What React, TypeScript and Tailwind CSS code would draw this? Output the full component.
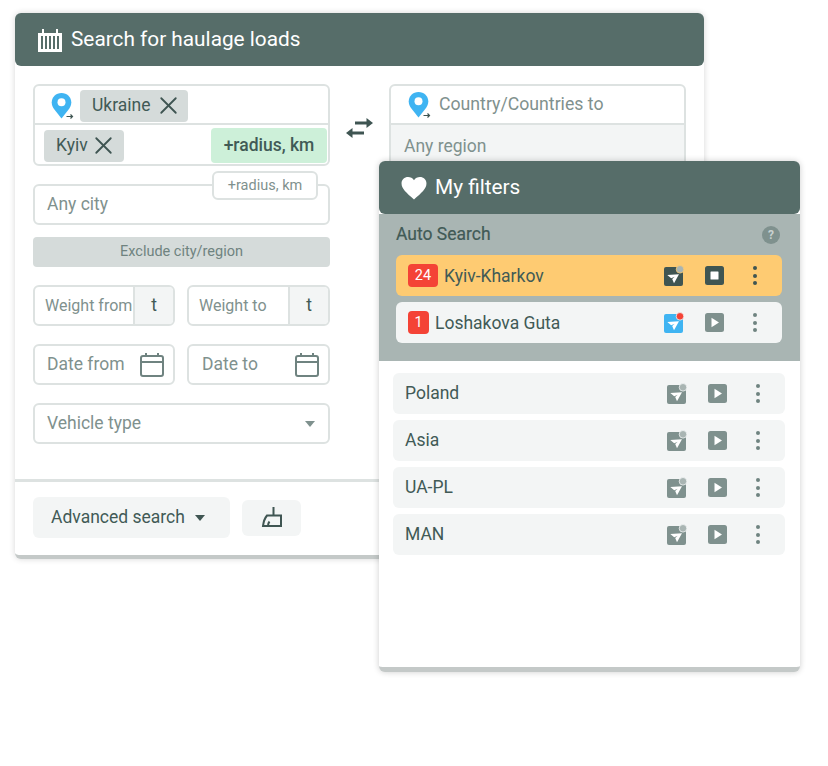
import { X } from "lucide-react";

function Pin() {
  return (
    <svg width="24" height="28" viewBox="0 0 24 28" className="shrink-0">
      <path d="M10.500 1C4.900 1 .7 5.200.7 10.600c0 2.600 1 4.600 2.300 6.500l7.500 9.400 7.500-9.400c1.300-1.900 2.300-3.900 2.300-6.500C20.300 5.200 16.100 1 10.500 1z" fill="#3fb4f2" />
      <circle cx="10.500" cy="10.200" r="4" fill="#fff" />
      <path d="M15.500 24.500h6M19.500 22.500l2 2-2 2" stroke="#3f5552" strokeWidth="1.200" fill="none" />
    </svg>
  );
}

function Chip({ label, spacing }: { label: string; spacing: string }) {
  return (
    <span className={`flex h-8 items-center rounded bg-[#d5dbda] pl-3 text-[17.500px] text-[#415a56] ${spacing}`}>
      {label}
      <X size={29} strokeWidth={1.500} className="text-[#3f5552]" />
    </span>
  );
}

function CalendarIcon() {
  return (
    <svg width="24" height="24" viewBox="0 0 24 24" fill="none" stroke="#6f8380" strokeWidth="2">
      <rect x="1" y="3" width="22" height="20" rx="2" />
      <path d="M1 9h22" />
      <path d="M6 0v3M18 0v3" />
    </svg>
  );
}

function Telegram({ bg, dot, ring }: { bg: string; dot: string; ring: string }) {
  return (
    <svg width="21" height="21" viewBox="0 0 21 21" className="overflow-visible">
      <rect x="0" y="2" width="19" height="19" rx="2" fill={bg} />
      <path d="M3.300 10l11.700-.7-5 9-1.800-4.300 2.500-2.200-3.500 1.500z" fill="#fff" />
      <circle cx="16" cy="4.300" r="3.800" fill={dot} stroke={ring} strokeWidth="0.800" />
    </svg>
  );
}

function Control({ bg, fill }: { bg: string; fill: "stop" | "play" }) {
  return (
    <svg width="19" height="19" viewBox="0 0 19 19">
      <rect width="19" height="19" rx="2.500" fill={bg} />
      {fill === "stop" ? <rect x="5.500" y="5.500" width="8" height="8" rx="0.500" fill="#fff" /> : <path d="M6.500 4.800l7.500 4.700-7.500 4.700z" fill="#fff" />}
    </svg>
  );
}

function Dots({ color }: { color: string }) {
  return (
    <span className="flex w-[4px] flex-col gap-[3.500px]">
      <i className="h-[4px] w-[4px] rounded-full" style={{ background: color }} />
      <i className="h-[4px] w-[4px] rounded-full" style={{ background: color }} />
      <i className="h-[4px] w-[4px] rounded-full" style={{ background: color }} />
    </span>
  );
}

function FilterRow({ name }: { name: string }) {
  return (
    <div className="flex h-[41px] items-center rounded-md bg-[#f3f5f5] pl-3 pr-[25px] text-[17.500px] text-[#415a56]">
      <span className="flex-1">{name}</span>
      <Telegram bg="#7f918e" dot="#a9b5b3" ring="#f3f5f5" />
      <span className="ml-[20px]"><Control bg="#7f918e" fill="play" /></span>
      <span className="ml-[29px]"><Dots color="#6f8380" /></span>
    </div>
  );
}

export default function App() {
  const field = "flex h-[41px] items-center rounded-md border-2 border-[#dde2e1] bg-white text-[17.500px] text-[#7f918e]";
  return (
    <div className="relative h-[766px] w-[828px] overflow-hidden bg-white font-['Roboto',sans-serif]">
      {/* search window */}
      <div className="absolute left-[15px] top-[13px] flex h-[546px] w-[689px] flex-col rounded-md border-b-[4px] border-[#c4c9c8] bg-white shadow-[0_0_6px_rgba(0,0,0,0.16)]">
        <div className="flex h-[53px] shrink-0 items-center gap-[9px] rounded-md bg-[#566d69] pl-[23px] pt-[1px] text-[20.800px] text-white">
          <svg width="24" height="23" viewBox="0 0 24 23">
            <path d="M0 4h24v19H0z" fill="#fff" />
            <path d="M3 7h2v13H3zM7 7h2v13H7zM11 7h2v13h-2zM15 7h2v13h-2zM19 7h2v13h-2z" fill="#566d69" />
            <path d="M4 0h2v4H4zM18 0h2v4h-2z" fill="#fff" />
          </svg>
          Search for haulage loads
        </div>

        <div className="flex flex-1 flex-col">
          <div className="flex items-start px-[18px] pt-[18px]">
            {/* from column */}
            <div className="relative flex w-[297px] flex-col">
              <div className="h-[82px] rounded-md border-2 border-[#dde2e1]">
                <div className="flex h-[39px] items-center gap-[5px] border-b-2 border-[#dde2e1] pl-[16px] pt-[2px]">
                  <Pin />
                  <Chip label="Ukraine" spacing="gap-[3px] pr-[5px]" />
                </div>
                <div className="flex h-[39px] items-center justify-between pl-[9px] pr-[1px] pt-[2px]">
                  <Chip label="Kyiv" spacing="gap-[1px] pr-[6px]" />
                  <span className="flex h-[35px] w-[116px] items-center justify-center rounded bg-[#cdf0d9] text-[17.500px] font-medium text-[#415a56]">+radius, km</span>
                </div>
              </div>
              <div className={`${field} mt-[18px] pl-[12px]`}>Any city</div>
              <span className="absolute left-[179px] top-[87px] flex h-[29px] w-[106px] items-center justify-center rounded-md border-2 border-[#dde2e1] bg-white text-[14.500px] text-[#7f918e]">+radius, km</span>
              <div className="mt-[12px] flex h-[30px] items-center justify-center rounded bg-[#d5dbda] text-[14.500px] text-[#6f8380]">Exclude city/region</div>
              <div className="mt-[18px] flex gap-[12px] text-[16px]">
                <div className={`${field} w-[142px] overflow-hidden pl-[10px] !text-[16px]`}>
                  <span className="flex-1 whitespace-nowrap">Weight from</span>
                  <span className="flex h-full w-[40px] shrink-0 items-center justify-center border-l-2 border-[#dde2e1] bg-[#f3f5f5] text-[17.500px] text-[#415a56]">t</span>
                </div>
                <div className={`${field} w-[143px] overflow-hidden pl-[10px] !text-[16px]`}>
                  <span className="flex-1 whitespace-nowrap">Weight to</span>
                  <span className="flex h-full w-[40px] shrink-0 items-center justify-center border-l-2 border-[#dde2e1] bg-[#f3f5f5] text-[17.500px] text-[#415a56]">t</span>
                </div>
              </div>
              <div className="mt-[18px] flex gap-[12px]">
                <div className={`${field} w-[142px] justify-between pl-[12px] pr-[9px]`}>
                  Date from
                  <CalendarIcon />
                </div>
                <div className={`${field} w-[143px] justify-between pl-[13px] pr-[9px]`}>
                  Date to
                  <CalendarIcon />
                </div>
              </div>
              <div className={`${field} mt-[18px] justify-between pl-[12px] pr-[13px]`}>
                Vehicle type
                <svg width="10" height="6" viewBox="0 0 10 6"><path d="M0 0h10L5 6z" fill="#7f918e" /></svg>
              </div>
            </div>

            {/* swap icon */}
            <svg width="27" height="20" viewBox="0 0 27 20" className="ml-[16px] mt-[34px] shrink-0">
              <path d="M9 5h14" stroke="#3f5552" strokeWidth="3" />
              <path d="M20.500 0l6.500 5-6.500 5z" fill="#3f5552" />
              <path d="M18 15H4" stroke="#3f5552" strokeWidth="3" />
              <path d="M6.500 10L0 15l6.500 5z" fill="#3f5552" />
            </svg>

            {/* to column */}
            <div className="ml-[16px] h-[90px] w-[298px] rounded-md border-2 border-[#dde2e1]">
              <div className="flex h-[39px] items-center gap-[7px] border-b-2 border-[#dde2e1] pl-[17px] text-[17.700px] text-[#7f918e]">
                <Pin />
                Country/Countries to
              </div>
              <div className="flex h-[43px] items-center bg-[#f3f5f5] pl-[13px] text-[17.500px] text-[#7f918e]">Any region</div>
            </div>
          </div>

          <div className="mt-auto border-t-[3px] border-[#dde2e1] px-[18px] pb-[17px] pt-[15px]">
            <div className="flex items-center gap-[12px]">
              <div className="flex h-[41px] w-[197px] items-center gap-[10px] rounded-md bg-[#f3f5f5] pl-[18px] text-[17.500px] text-[#415a56]">
                Advanced search
                <svg width="10" height="6" viewBox="0 0 10 6"><path d="M0 0h10L5 6z" fill="#3f5552" /></svg>
              </div>
              <div className="flex h-[36px] w-[59px] items-center justify-center rounded-md bg-[#f3f5f5]">
                <svg width="22" height="22" viewBox="0 0 22 22" fill="none" stroke="#3f5552" strokeWidth="2" className="-mt-[2px]">
                  <path d="M12.500 1v8M6 9.500h14v10.500H2c.5-4 1.500-7.500 4-10.500z" />
                  <path d="M7 20c0-2 .4-3.200 1.500-4.500" />
                </svg>
              </div>
            </div>
          </div>
        </div>
      </div>

      {/* filters window */}
      <div className="absolute left-[379px] top-[161px] flex h-[511px] w-[421px] flex-col rounded-md border-b-[5px] border-[#c4c9c8] bg-white shadow-[0_0_6px_rgba(0,0,0,0.2)]">
        <div className="flex h-[53px] shrink-0 items-center gap-[8px] rounded-md bg-[#566d69] pl-[22px] text-[20.800px] text-white">
          <svg width="26" height="24" viewBox="0 0 24 22"><path d="M12 21.500C5 15.500.5 11.500.5 6.800.5 3.200 3.300.8 6.500.8c2.200 0 4.300 1 5.500 3 1.200-2 3.300-3 5.500-3 3.200 0 6 2.400 6 6 0 4.700-4.500 8.700-11.500 14.700z" fill="#fff" /></svg>
          My filters
        </div>
        <div className="h-[147px] shrink-0 bg-[#a9b5b3] pl-[17px] pr-[18px]">
          <div className="flex h-[41px] items-center justify-between pr-[2px] text-[17.500px] text-[#415a56]">
            <span className="[-webkit-text-stroke:0.2px_#415a56]">Auto Search</span>
            <span className="flex h-[18px] w-[18px] items-center justify-center rounded-full bg-[#7f918e] text-[12px] font-bold text-[#c9d1d0]">?</span>
          </div>
          <div className="flex h-[41px] items-center rounded-md bg-[#fecb72] pl-3 pr-[25px] text-[17.500px] text-[#415a56]">
            <span className="flex h-[23px] w-[30px] items-center justify-center rounded-sm bg-[#f44336] text-[14.500px] text-white">24</span>
            <span className="ml-[6px] flex-1 pt-[1px]">Kyiv-Kharkov</span>
            <Telegram bg="#3f5552" dot="#a9b5b3" ring="#fecb72" />
            <span className="ml-[20px]"><Control bg="#3f5552" fill="stop" /></span>
            <span className="ml-[29px]"><Dots color="#3f5552" /></span>
          </div>
          <div className="mt-[6px] flex h-[41px] items-center rounded-md bg-[#f3f5f5] pl-3 pr-[25px] text-[17.500px] text-[#415a56]">
            <span className="flex h-[23px] w-[21px] items-center justify-center rounded-sm bg-[#f44336] text-[14.500px] text-white">1</span>
            <span className="ml-[6px] flex-1 pt-[1px]">Loshakova Guta</span>
            <Telegram bg="#3fb4f2" dot="#f44336" ring="#f3f5f5" />
            <span className="ml-[20px]"><Control bg="#7f918e" fill="play" /></span>
            <span className="ml-[29px]"><Dots color="#6f8380" /></span>
          </div>
        </div>
        <div className="flex flex-col gap-[6px] pl-[14px] pr-[15px] pt-[12px]">
          <FilterRow name="Poland" />
          <FilterRow name="Asia" />
          <FilterRow name="UA-PL" />
          <FilterRow name="MAN" />
        </div>
      </div>
    </div>
  );
}
